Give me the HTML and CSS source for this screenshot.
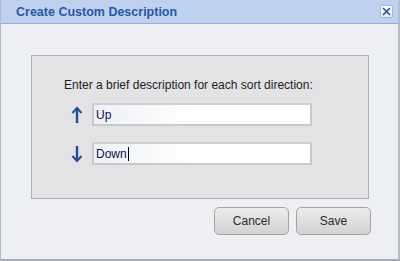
FILE: index.html
```html
<!DOCTYPE html>
<html lang="en">
  <head>
    <meta charset="UTF-8" />
    <title>Create Custom Description</title>
    <link rel="stylesheet" href="styles.css">
  </head>
  <body>
    <div class="dialog">
      <div class="titlebar">
        <span class="title">Create Custom Description</span>
        <button class="closeBtn">
          <svg width="9" height="9" viewBox="0 0 9 9">
            <path d="M1 1 L8 8 M8 1 L1 8" stroke="#2a4f9a" stroke-width="1.6" fill="none" />
          </svg>
        </button>
      </div>
      <div class="content">
        <div class="panel">
          <div class="hint">Enter a brief description for each sort direction:</div>
          <div class="row">
            <svg class="arrow" width="12" height="18" viewBox="0 0 12 18">
              <path d="M6 2 L6 17" stroke="#1f4d96" stroke-width="2.4" fill="none" />
              <path d="M1.5 7 L6 2 L10.5 7" stroke="#1f4d96" stroke-width="2" fill="none" />
            </svg>
            <input class="desc" type="text" value="Up" />
          </div>
          <div class="row">
            <svg class="arrow" width="12" height="18" viewBox="0 0 12 18">
              <path d="M6 1 L6 16" stroke="#1f4d96" stroke-width="2.4" fill="none" />
              <path d="M1.5 11 L6 16 L10.5 11" stroke="#1f4d96" stroke-width="2" fill="none" />
            </svg>
            <div class="desc">Down<span class="caret"></span></div>
          </div>
        </div>
        <div class="buttons">
          <button class="btn">Cancel</button>
          <button class="btn">Save</button>
        </div>
      </div>
    </div>
  </body>
</html>
```

FILE: styles.css
```css
body {
  margin: 0;
  font-family: "Liberation Sans", Arial, sans-serif;
}
.dialog {
  width: 400px;
  height: 261px;
  box-sizing: border-box;
  background-color: #eeeff2;
  border-left: 1px solid #b3b8cc;
  border-right: 2px solid #b9bccb;
  border-bottom: 2px solid #a7abb8;
}
.titlebar {
  height: 23px;
  display: flex;
  align-items: center;
  justify-content: space-between;
  padding: 0 5px 0 15px;
  background-color: #bed2f0;
  border-bottom: 1px solid #8fb1e3;
}
.title {
  font-size: 12.5px;
  font-weight: bold;
  color: #2a57a6;
}
.closeBtn {
  width: 13px;
  height: 13px;
  padding: 0;
  display: flex;
  align-items: center;
  justify-content: center;
  border: 1px solid #a3b7d8;
  border-radius: 2px;
  background: linear-gradient(#ffffff, #e3ebf7);
}
.content {
  padding: 31px 29px 0 30px;
}
.panel {
  height: 144px;
  box-sizing: border-box;
  padding: 22px 0 0 32px;
  background-color: #e3e2e5;
  border: 1px solid #a9adc6;
}
.hint {
  font-size: 12px;
  line-height: 14px;
  color: #1d1d24;
  margin-bottom: 11px;
}
.row {
  display: flex;
  align-items: center;
  margin-bottom: 16px;
}
.arrow {
  margin: 0 9px 0 7px;
}
.desc {
  width: 220px;
  height: 23px;
  box-sizing: border-box;
  padding: 0 0 0 2px;
  border: 2px solid #c9c9c9;
  border-top-color: #cfcfcf;
  background: linear-gradient(to right, #edf1f5, #ffffff 45%);
  font-family: "Liberation Sans", Arial, sans-serif;
  font-size: 12px;
  color: #10104a;
  display: flex;
  align-items: center;
  outline: none;
}
.caret {
  width: 1px;
  height: 14px;
  margin-left: 1px;
  background-color: #000;
}
.buttons {
  display: flex;
  justify-content: flex-end;
  gap: 7px;
  margin: 8px -2px 0 0;
}
.btn {
  width: 75px;
  height: 28px;
  border: 1px solid #a4a4a4;
  border-radius: 5px;
  background: linear-gradient(#ececec, #d2d2d2);
  font-family: "Liberation Sans", Arial, sans-serif;
  font-size: 12px;
  color: #2b2b2b;
}
```
